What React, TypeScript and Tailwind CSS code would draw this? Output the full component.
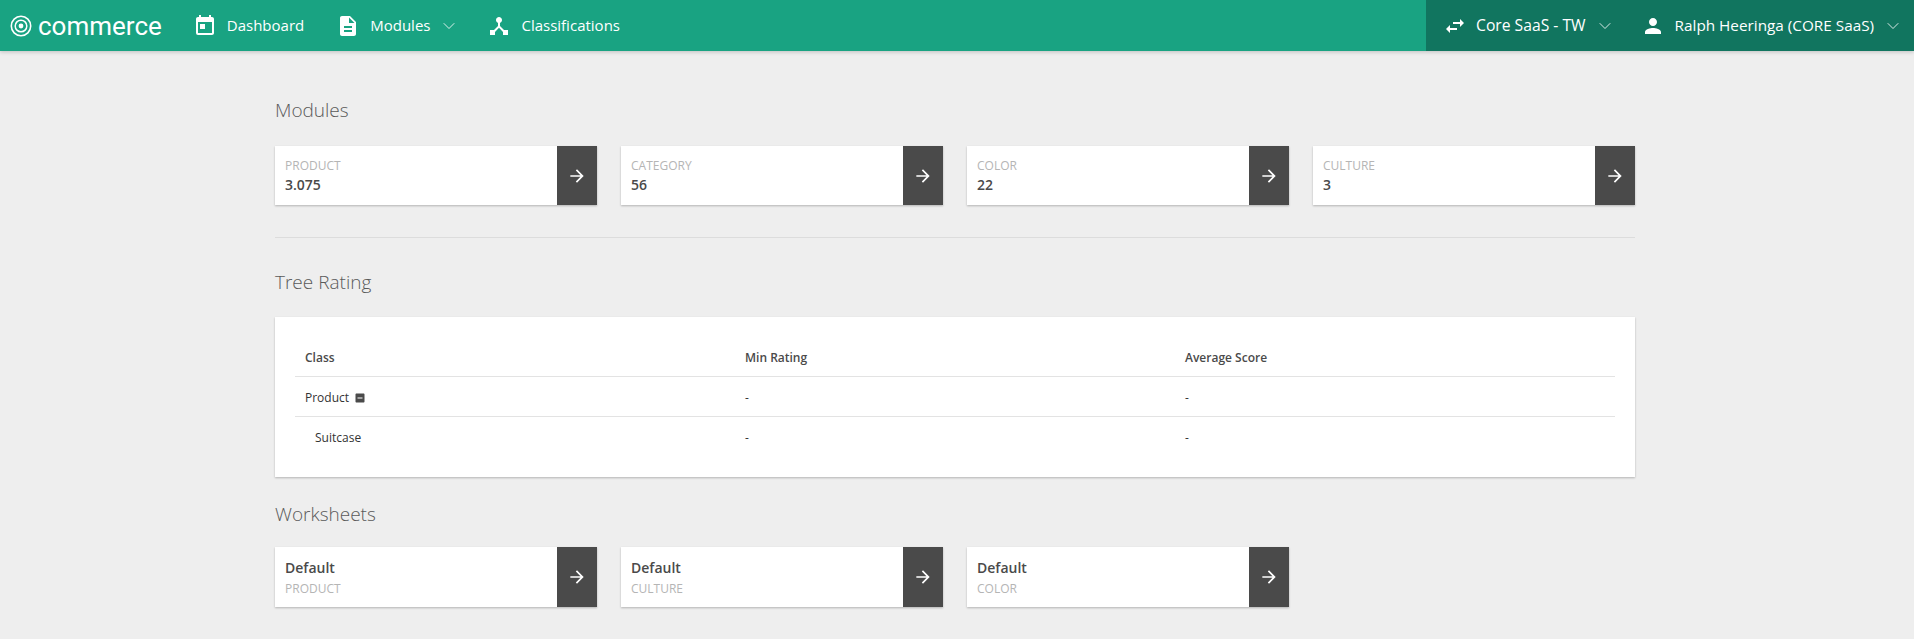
import React from 'react';
import { ChevronDown } from 'lucide-react';
import { MdToday, MdDescription, MdDeviceHub, MdSwapHoriz, MdPerson, MdArrowForward, MdIndeterminateCheckBox } from 'react-icons/md';

const Chevron = () => <ChevronDown className="h-5 w-5" strokeWidth={1} />;

const NavItem = ({ icon, label, chevron, className = 'text-[15px]' }: { icon: React.ReactNode; label: string; chevron?: boolean; className?: string }) => (
  <div className={`flex items-center text-white ${className}`}>
    {icon}
    <span>{label}</span>
    {chevron && <span className="ml-[9px]"><Chevron /></span>}
  </div>
);

const ArrowButton = () => (
  <div className="flex w-10 shrink-0 items-center justify-center bg-[#4a4a4a] text-white">
    <MdArrowForward className="h-5 w-5" />
  </div>
);

const ModuleCard = ({ label, value }: { label: string; value: string }) => (
  <div className="flex h-[59px] bg-white shadow-[0_1px_2px_rgba(0,0,0,0.25)]">
    <div className="flex-1 pl-[10px] pt-3">
      <div className="text-[12px] leading-[16px] text-[#b5b5b5]">{label}</div>
      <div className="mt-px text-[14px] font-semibold leading-[20px] text-[#4a4a4a]">{value}</div>
    </div>
    <ArrowButton />
  </div>
);

const WorksheetCard = ({ label }: { label: string }) => (
  <div className="flex h-[60px] bg-white shadow-[0_1px_2px_rgba(0,0,0,0.25)]">
    <div className="flex-1 pl-[10px] pt-[11px]">
      <div className="text-[14px] font-semibold leading-[20px] text-[#4a4a4a]">Default</div>
      <div className="mt-px text-[12px] leading-[20px] text-[#b5b5b5]">{label}</div>
    </div>
    <ArrowButton />
  </div>
);

const Heading = ({ children }: { children: string }) => (
  <h2 className="text-[19px] font-light leading-[26px] text-[#5a5a5a]">{children}</h2>
);

const Row = ({ first, b, c, className }: { first: React.ReactNode; b: string; c: string; className: string }) => (
  <div className={`grid grid-cols-3 pt-[3px] text-[12px] ${className}`}>
    <div className="flex items-center pl-[10px]">{first}</div>
    <div className="flex items-center pl-[10px]">{b}</div>
    <div className="flex items-center pl-[10px]">{c}</div>
  </div>
);

export default function App() {
  return (
    <div className="min-h-[639px] overflow-hidden bg-[#eeeeee] font-['Open_Sans',sans-serif]">
      <header className="relative flex h-[51px] items-stretch justify-between bg-[#19a382] shadow-[0_1px_4px_rgba(0,0,0,0.2)]">
        <div className="flex items-center">
          <div className="ml-[10px] flex items-center">
            <svg width="22" height="22" viewBox="0 0 22 22" fill="none" stroke="white">
              <circle cx="11" cy="11" r="9.7" strokeWidth="1.6" />
              <circle cx="11" cy="11" r="5.8" strokeWidth="1.5" />
              <circle cx="11" cy="11" r="2.4" fill="white" strokeWidth="0" />
            </svg>
            <span className="ml-[6px] font-['Roboto',sans-serif] text-[26px] leading-none text-white">commerce</span>
          </div>
          <div className="ml-[31px] flex items-center gap-7">
            <NavItem icon={<MdToday className="mr-[10px] h-6 w-6" />} label="Dashboard" />
            <div className="ml-1">
              <NavItem icon={<MdDescription className="mr-[10px] h-6 w-6" />} label="Modules" chevron />
            </div>
            <NavItem icon={<MdDeviceHub className="mr-[10px] h-6 w-6" />} label="Classifications" />
          </div>
        </div>
        <div className="flex w-[488px] items-center bg-[#11755f] pl-[17px]">
          <NavItem className="text-[15.7px]" icon={<MdSwapHoriz className="mr-[9px] h-6 w-6" />} label="Core SaaS - TW" chevron />
          <div className="ml-[26px]">
            <NavItem className="text-[15.3px]" icon={<MdPerson className="mr-[10px] h-6 w-6" />} label="Ralph Heeringa (CORE SaaS)" chevron />
          </div>
        </div>
      </header>

      <main className="ml-[275px] w-[1360px] pt-[46px]">
        <Heading>Modules</Heading>
        <div className="mt-[23px] grid grid-cols-4 gap-6">
          <ModuleCard label="PRODUCT" value="3.075" />
          <ModuleCard label="CATEGORY" value="56" />
          <ModuleCard label="COLOR" value="22" />
          <ModuleCard label="CULTURE" value="3" />
        </div>
        <div className="mt-8 h-px bg-[#dcdcdc]" />

        <div className="mt-[31px]"><Heading>Tree Rating</Heading></div>
        <div className="mt-[22px] h-[160px] bg-white px-5 pt-5 shadow-[0_1px_2px_rgba(0,0,0,0.25)]">
          <Row className="h-[40px] border-b border-[#e3e3e3] font-semibold text-[#4a4a4a]" first="Class" b="Min Rating" c="Average Score" />
          <Row
            className="h-[40px] border-b border-[#e3e3e3] text-[#333333]"
            first={<><span>Product</span><MdIndeterminateCheckBox className="ml-[5px] h-[12px] w-[12px] text-[#4a4a4a]" /></>}
            b="-"
            c="-"
          />
          <Row className="h-[39px] text-[#333333]" first={<span className="pl-[10px]">Suitcase</span>} b="-" c="-" />
        </div>

        <div className="mt-6"><Heading>Worksheets</Heading></div>
        <div className="mt-[20px] grid grid-cols-4 gap-6">
          <WorksheetCard label="PRODUCT" />
          <WorksheetCard label="CULTURE" />
          <WorksheetCard label="COLOR" />
        </div>
      </main>
    </div>
  );
}
